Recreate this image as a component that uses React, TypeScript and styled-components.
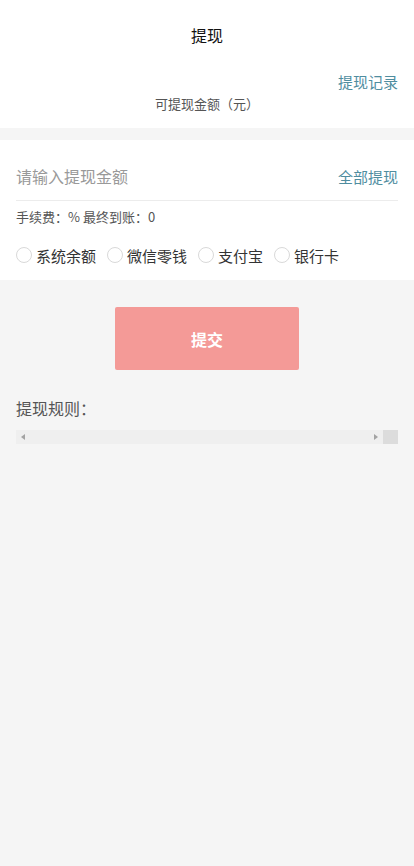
import React from "react";
import styled, { createGlobalStyle } from "styled-components";

const Global = createGlobalStyle`
  html, body { margin: 0; padding: 0; background: #f5f5f5; }
  body { font-family: "Noto Sans CJK SC", "Noto Sans", sans-serif; }
  * { box-sizing: border-box; }
`;

const Page = styled.div`
  width: 414px;
  min-height: 866px;
  background: #f5f5f5;
  display: flex;
  flex-direction: column;
`;

const TopCard = styled.div`
  background: #fff;
  height: 128px;
  display: flex;
  flex-direction: column;
`;

const Title = styled.div`
  height: 70px;
  display: flex;
  align-items: center;
  justify-content: center;
  font-size: 16px;
  font-weight: 400;
  color: #111;
`;

const RecordRow = styled.div`
  display: flex;
  justify-content: flex-end;
  padding: 0 16px;
  height: 22px;
  align-items: center;
`;

const Link = styled.span`
  color: #4f8d9f;
  font-size: 15px;
`;

const Balance = styled.div`
  text-align: center;
  font-size: 13px;
  color: #555;
  height: 22px;
  line-height: 22px;
  margin-top: 1px;
`;

const FormCard = styled.div`
  background: #fff;
  margin-top: 12px;
  height: 140px;
  padding: 0 16px;
  display: flex;
  flex-direction: column;
`;

const InputRow = styled.div`
  height: 61px;
  padding-top: 12px;
  display: flex;
  align-items: center;
  justify-content: space-between;
  border-bottom: 1px solid #ececec;
`;

const Input = styled.input`
  border: none;
  outline: none;
  font-family: inherit;
  font-size: 16px;
  color: #333;
  padding: 0;
  width: 220px;
  background: transparent;
  &::placeholder { color: #999; }
`;

const Fee = styled.div`
  height: 30px;
  display: flex;
  align-items: center;
  font-size: 13px;
  color: #555;
`;

const RadioRow = styled.div`
  height: 48px;
  display: flex;
  align-items: center;
  gap: 11px;
`;

const RadioItem = styled.label`
  display: flex;
  align-items: center;
  gap: 4px;
  font-size: 15px;
  color: #333;
`;

const Circle = styled.span`
  width: 16px;
  height: 16px;
  border-radius: 50%;
  border: 1px solid #d9d9d9;
  background: #fff;
  display: inline-block;
`;

const Body = styled.div`
  display: flex;
  flex-direction: column;
  padding: 27px 16px 0;
`;

const SubmitButton = styled.button`
  align-self: center;
  width: 184px;
  height: 63px;
  border: none;
  border-radius: 2px;
  background: #f49a97;
  color: #fff;
  font-family: inherit;
  font-size: 16px;
  font-weight: bold;
`;

const RulesTitle = styled.div`
  margin-top: 27px;
  font-size: 16px;
  color: #555;
  height: 22px;
  line-height: 22px;
`;

const ScrollBar = styled.div`
  margin-top: 11px;
  height: 14px;
  display: flex;
  align-items: center;
  background: #efefef;
`;

const Arrow = styled.span<{ $dir: "left" | "right" }>`
  width: 0;
  height: 0;
  border-top: 3.5px solid transparent;
  border-bottom: 3.5px solid transparent;
  ${(p) =>
    p.$dir === "left"
      ? "border-right: 4px solid #a3a3a3; margin-left: 5px;"
      : "border-left: 4px solid #a3a3a3; margin-right: 5px;"}
`;

const Spacer = styled.div`
  flex: 1;
`;

const Thumb = styled.div`
  width: 15px;
  height: 14px;
  background: #dcdcdc;
`;

const methods = ["系统余额", "微信零钱", "支付宝", "银行卡"];

export default function App() {
  return (
    <Page>
      <Global />
      <TopCard>
        <Title>提现</Title>
        <RecordRow>
          <Link>提现记录</Link>
        </RecordRow>
        <Balance>可提现金额（元）</Balance>
      </TopCard>
      <FormCard>
        <InputRow>
          <Input placeholder="请输入提现金额" />
          <Link>全部提现</Link>
        </InputRow>
        <Fee>手续费：% 最终到账：0</Fee>
        <RadioRow>
          {methods.map((m) => (
            <RadioItem key={m}>
              <Circle />
              {m}
            </RadioItem>
          ))}
        </RadioRow>
      </FormCard>
      <Body>
        <SubmitButton>提交</SubmitButton>
        <RulesTitle>提现规则：</RulesTitle>
        <ScrollBar>
          <Arrow $dir="left" />
          <Spacer />
          <Arrow $dir="right" />
          <Thumb />
        </ScrollBar>
      </Body>
    </Page>
  );
}
